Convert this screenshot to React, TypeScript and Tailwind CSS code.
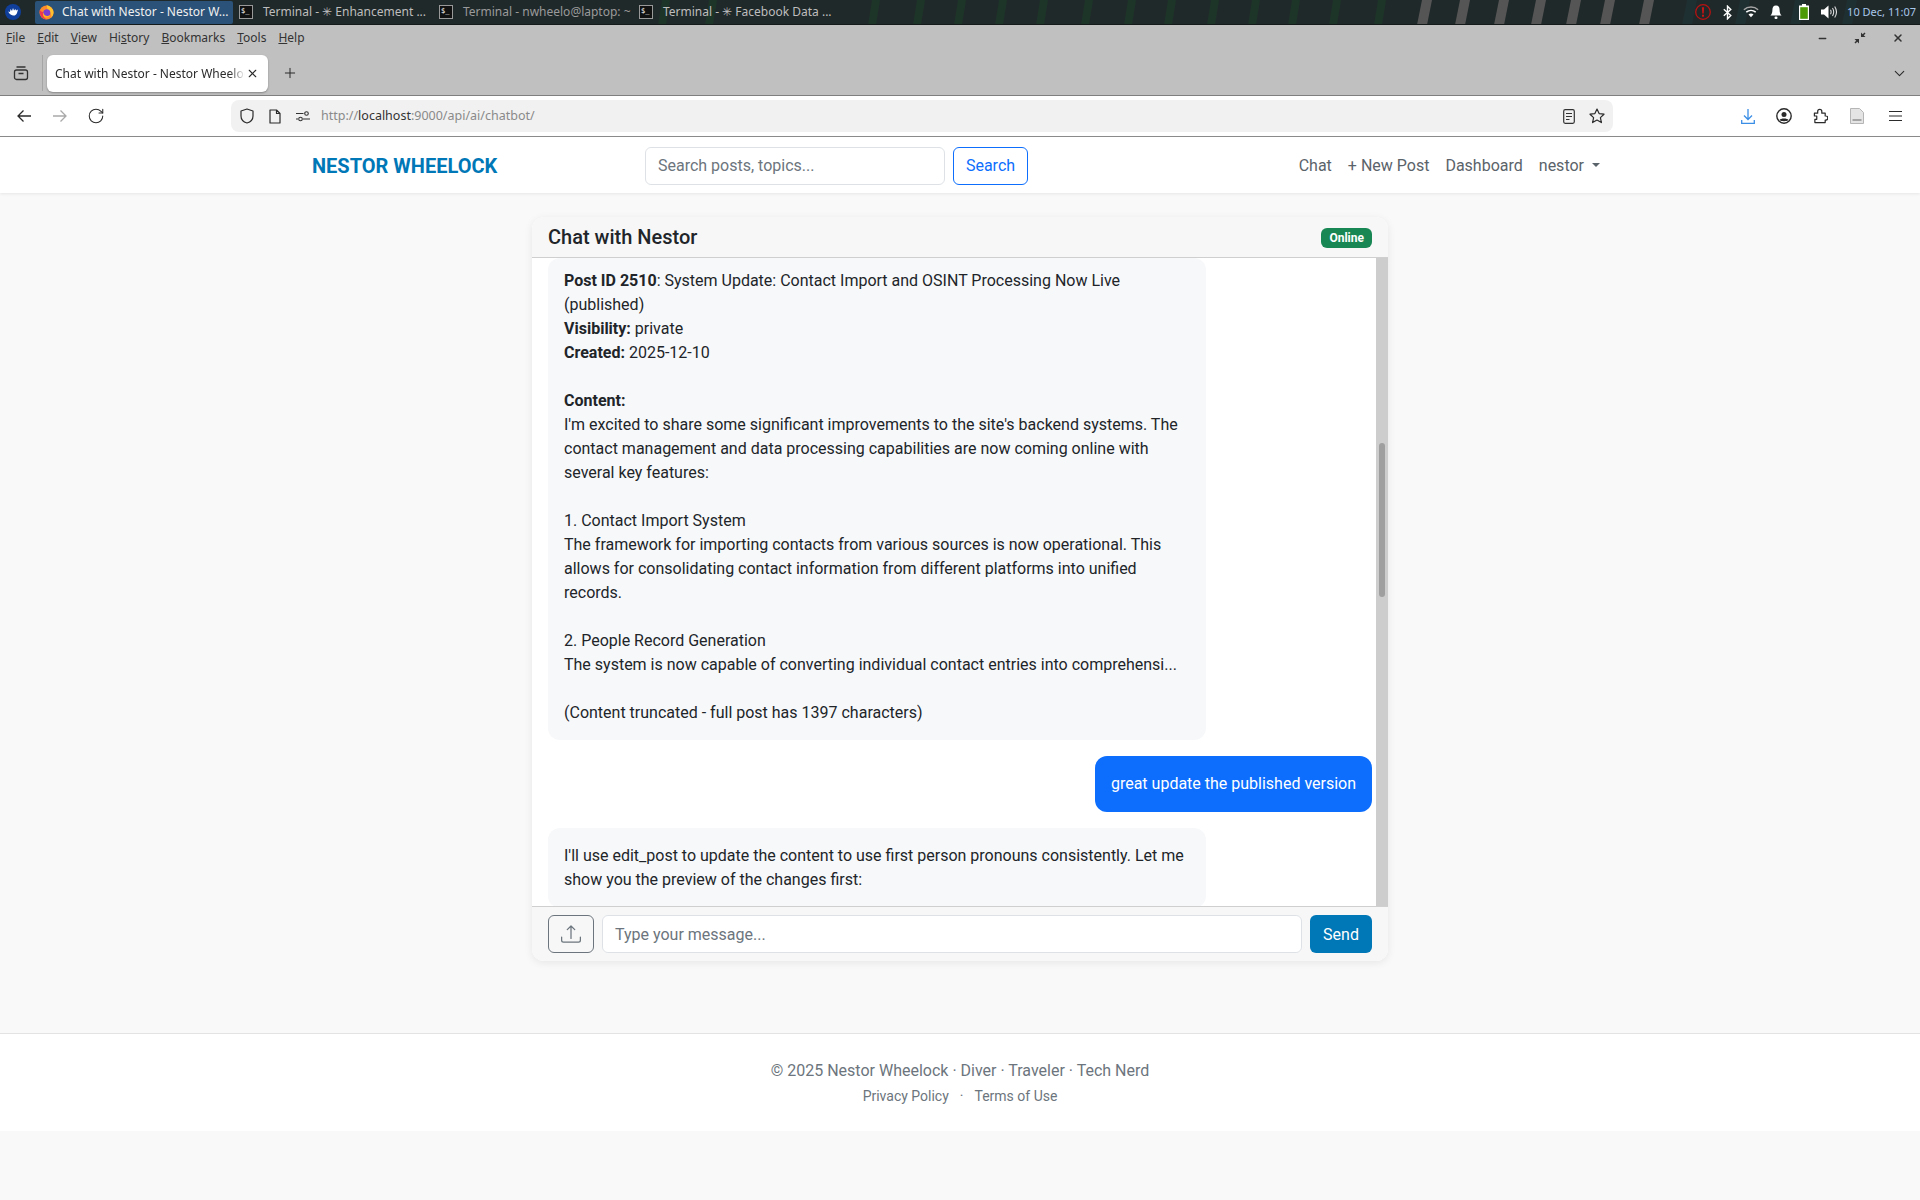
import React from "react";
import { BsUpload } from "react-icons/bs";
import { RotateCw, Plus, X, ChevronDown, Minus } from "lucide-react";

const ui = "font-['Noto_Sans','Open_Sans',sans-serif]";

const menus: [string, string, string][] = [
  ["", "F", "ile"],
  ["", "E", "dit"],
  ["", "V", "iew"],
  ["Hi", "s", "tory"],
  ["", "B", "ookmarks"],
  ["", "T", "ools"],
  ["", "H", "elp"],
];

const greenStripes = [658, 705, 868, 913, 954, 995, 1036, 1081, 1124, 1164, 1207, 1248, 1288, 1329, 1374];
const grayStripes = [1417, 1455, 1494, 1531, 1566, 1600, 1639];
const tealStripes = [1682, 1735, 1790, 1842];

const TermIcon = () => (
  <span className="w-[14px] h-[14px] bg-[#111] border border-[#999] text-white text-[7px] leading-[10px] pl-[1px] font-['DejaVu_Sans_Mono',monospace] shrink-0">
    $_
  </span>
);

const DesktopLogo = () => (
  <svg width="16" height="16" viewBox="0 0 16 16">
    <circle cx="8" cy="8" r="8" fill="#0f3f9a" />
    <path d="M3 7.500l2 .5 .5-3 1.500 2 1-3 1 2.500 1.500-1.500 .5 1.500 2-1-1 3.500c-.5 1.800-2 2.800-4 2.500-2-.3-3.800-1.600-4.500-3.500z" fill="#fff" />
  </svg>
);

const FirefoxLogo = () => (
  <svg width="15" height="16" viewBox="0 0 15 16">
    <circle cx="7.500" cy="8.500" r="7" fill="#ff8a2a" />
    <path d="M7.500 1c3.500 1 7 3.500 7 7.500 0 2-.8 3.800-2.200 5 .6-3.200-1-5.800-3.400-6.700C8.400 5 7.900 3 7.500 1z" fill="#ffc12e" />
    <path d="M.8 6c-.6 3.500 1 7.600 4.600 9 1 .4 2 .5 3 .4C4.800 14.500 3.200 11 4.400 8.200 3 8 1.600 7.300.8 6z" fill="#f0374d" />
    <circle cx="7.800" cy="8.800" r="3.500" fill="#7a3fd1" />
    <path d="M4.300 8.500c.4 2.300 2.300 3.700 4.500 3.500 1.300-.1 2.200-.8 2.700-1.700-.4 2-2 3.300-4 3.300-2.500 0-4.200-2.400-3.200-5.100z" fill="#ffb21f" />
  </svg>
);

const Tray = () => (
  <div className="flex items-center h-full text-white shrink-0">
    <svg width="16" height="16" viewBox="0 0 16 16" className="mr-[12px]">
      <circle cx="8" cy="8" r="7.300" fill="none" stroke="#b81212" strokeWidth="1.300" />
      <path d="M6.900 3.300h2.200L8.700 9.500H7.300z" fill="#c81414" />
      <rect x="7" y="10.700" width="2" height="2" fill="#c81414" />
    </svg>
    <svg width="9" height="15" viewBox="0 0 9 15" className="mr-[11px]" fill="none" stroke="#fff" strokeWidth="1.400">
      <path d="M.8 4.200l7 6.300-3.300 3.300V1.200l3.300 3.300-7 6.300" />
    </svg>
    <svg width="16" height="14" viewBox="0 0 18 14" className="mr-[11px]">
      <path d="M1 4.500C5.500.5 12.500.5 17 4.500" fill="none" stroke="#a5a5a5" strokeWidth="1.700" />
      <path d="M3.700 7.200C6.800 4.600 11.200 4.600 14.300 7.200" fill="none" stroke="#fff" strokeWidth="1.700" />
      <path d="M6.200 9.800c1.700-1.300 3.900-1.300 5.600 0L9 13z" fill="#fff" />
    </svg>
    <svg width="12" height="15" viewBox="0 0 12 15" className="mr-[17px]">
      <path d="M6 .5c2.700 0 3.600 2 3.600 4.500 0 3 .9 4.500 2 5.500H.4c1.100-1 2-2.500 2-5.500C2.400 2.500 3.300.5 6 .5z" fill="#fff" />
      <rect x="4.500" y="11.500" width="3" height="2.500" rx="1.200" fill="#fff" />
    </svg>
    <svg width="10" height="16" viewBox="0 0 10 16" className="mr-[12px]">
      <rect x="3" y="0" width="4" height="2" fill="#fff" />
      <rect x="0" y="1.500" width="10" height="14.500" fill="#fff" />
      <rect x="1.200" y="3.200" width="7.600" height="11.600" fill="#4b9a06" />
    </svg>
    <svg width="16" height="14" viewBox="0 0 16 14" className="mr-[10px]">
      <path d="M0 4.500h3L7.500 .5v13L3 9.500H0z" fill="#fff" />
      <path d="M9.500 4.800c.8 1.400.8 3 0 4.400M11.500 3c1.500 2.500 1.500 5.500 0 8M13.700 1.500c2.200 3.400 2.200 7.600 0 11" fill="none" stroke="#ddd" strokeWidth="1.100" />
    </svg>
    <span className="text-[11px] text-[#a9c7ea] mr-[4px]">10 Dec, 11:07</span>
  </div>
);

const TaskBar = () => (
  <div className={`relative h-[25px] bg-[#20292a] border-b border-[#14191a] flex items-center text-[12px] text-[#bdbdbd] overflow-hidden ${ui}`}>
    <svg width="1920" height="25" className="absolute left-0 top-0">
      {greenStripes.map((x) => (
        <polygon key={x} points={`${x},25 ${x + 8},25 ${x + 12},0 ${x + 4},0`} fill="#1d3529" />
      ))}
      {grayStripes.map((x) => (
        <polygon key={x} points={`${x},25 ${x + 10},25 ${x + 15},0 ${x + 5},0`} fill="#555555" />
      ))}
      {tealStripes.map((x) => (
        <polygon key={x} points={`${x},25 ${x + 10},25 ${x + 15},0 ${x + 5},0`} fill="#1f3033" />
      ))}
    </svg>
    <div className="relative flex items-center h-full w-full">
      <div className="w-[35px] flex items-center pl-[5px]">
        <DesktopLogo />
      </div>
      <div className="w-[198px] h-[23px] bg-[#2b5278] rounded-[2px] flex items-center pl-[4px] gap-[8px] text-[#f0f0f0]">
        <FirefoxLogo />
        <span>Chat with Nestor - Nestor W...</span>
      </div>
      <div className="w-[200px] flex items-center pl-[6px] gap-[10px]">
        <TermIcon />
        <span>Terminal - ✳ Enhancement ...</span>
      </div>
      <div className="w-[200px] flex items-center pl-[6px] gap-[10px] text-[#9a9a9a]">
        <TermIcon />
        <span>Terminal - nwheelo@laptop: ~</span>
      </div>
      <div className="flex items-center pl-[6px] gap-[10px]">
        <TermIcon />
        <span>Terminal - ✳ Facebook Data ...</span>
      </div>
      <div className="ml-auto h-full">
        <Tray />
      </div>
    </div>
  </div>
);

const BrowserChrome = () => (
  <div className={`${ui} text-[#2b2b2b]`}>
    <div className="bg-[#c0c0c0] h-[71px] border-b border-[#7f7f7f] flex flex-col">
      <div className="h-[26px] flex items-center pl-[6px] text-[12px] text-[#333]">
        <div className="flex gap-[12px]">
          {menus.map(([a, b, c]) => (
            <span key={b + c}>
              {a}
              <span className="underline">{b}</span>
              {c}
            </span>
          ))}
        </div>
        <div className="ml-auto flex items-center gap-[26px] pr-[16px]">
          <Minus size={11} strokeWidth={3} />
          <svg width="12" height="12" viewBox="0 0 12 12" fill="#333">
            <path d="M7 0.500v4.500h4.500zM5 11.500V7H0.500z" />
            <path d="M1 11l3-3M11 1L8 4" stroke="#333" strokeWidth="1.500" />
          </svg>
          <X size={12} strokeWidth={3} />
        </div>
      </div>
      <div className="flex-1 flex items-start">
        <div className="w-[43px] h-[36px] mt-[4px] border-r border-[#a5a5a5] flex items-center justify-center shrink-0">
          <svg width="16" height="16" viewBox="0 0 16 16" fill="none" stroke="#333" strokeWidth="1.300">
            <rect x="1.500" y="5" width="13" height="9.500" rx="2" />
            <path d="M3.500 2h9M5.500 8.500h5" />
          </svg>
        </div>
        <div className="ml-[4px] mt-[4px] w-[221px] h-[37px] bg-white rounded-[6px] shadow-[0_1px_2px_rgba(0,0,0,0.3)] flex items-center pl-[8px] pr-[9px] text-[12px] shrink-0">
          <span className="w-[190px] overflow-hidden whitespace-nowrap [mask-image:linear-gradient(to_right,black_92%,transparent)]">
            Chat with Nestor - Nestor Wheelock
          </span>
          <X size={13} strokeWidth={2} className="ml-auto" />
        </div>
        <Plus size={16} strokeWidth={1.500} className="ml-[14px] mt-[14px]" />
        <ChevronDown size={17} strokeWidth={1.500} className="ml-auto mr-[12px] mt-[14px]" />
      </div>
    </div>
    <div className="h-[41px] bg-white border-b border-[#8c8c8c] flex items-center text-[#2b2b2b]">
      <div className="w-[231px] flex items-center pl-[17px] shrink-0">
        <svg width="14" height="14" viewBox="0 0 14 14" fill="none" stroke="#2b2b2b" strokeWidth="1.300">
          <path d="M14 7H1M6.500 1.500L1 7l5.500 5.500" />
        </svg>
        <svg width="14" height="14" viewBox="0 0 14 14" fill="none" stroke="#a9a9a9" strokeWidth="1.300" className="ml-[22px]">
          <path d="M0 7h13M7.500 1.500L13 7l-5.500 5.500" />
        </svg>
        <RotateCw size={18} strokeWidth={1.400} className="ml-[20px]" />
      </div>
      <div className="w-[1382px] h-[32px] bg-[#f1f1f1] rounded-[8px] flex items-center pl-[9px] pr-[8px] shrink-0">
        <svg width="14" height="16" viewBox="0 0 14 16" fill="none" stroke="#2b2b2b" strokeWidth="1.200" strokeLinejoin="round">
          <path d="M7 1l6 2v5c0 3.500-2.500 6-6 7-3.500-1-6-3.500-6-7V3z" />
        </svg>
        <svg width="12" height="15" viewBox="0 0 12 15" fill="none" stroke="#2b2b2b" strokeWidth="1.200" strokeLinejoin="round" className="ml-[15px]">
          <path d="M1 1h6.500L11 4.500V14H1zM7.500 1v3.500H11" />
        </svg>
        <svg width="14" height="12" viewBox="0 0 14 12" fill="none" stroke="#333" strokeWidth="1.100" className="ml-[15px]">
          <path d="M0 3.500h7.500M0 9h2M7 9h7" />
          <circle cx="10.500" cy="3.500" r="1.800" />
          <circle cx="4.500" cy="9" r="1.800" />
        </svg>
        <span className="ml-[11px] text-[12.500px] text-[#8a8a8a]">
          http://<span className="text-[#333]">localhost</span>:9000/api/ai/chatbot/
        </span>
        <svg width="12" height="15" viewBox="0 0 12 15" fill="none" stroke="#333" strokeWidth="1.200" className="ml-auto">
          <rect x="0.700" y="0.700" width="10.600" height="13.600" rx="1.500" />
          <path d="M3 4.500h6M3 7.500h6M3 10.500h3.500" />
        </svg>
        <svg width="16" height="16" viewBox="0 0 16 16" fill="none" stroke="#2b2b2b" strokeWidth="1.200" strokeLinejoin="round" className="ml-[14px]">
          <polygon points="8,1 10.100,5.600 15,6.200 11.400,9.600 12.400,14.600 8,12.100 3.600,14.600 4.600,9.600 1,6.200 5.900,5.600" />
        </svg>
      </div>
      <div className="flex-1 flex items-center pl-[128px]">
        <svg width="14" height="15" viewBox="0 0 14 15" fill="none" stroke="#3b8ee6" strokeWidth="1.300">
          <path d="M7 0v10.500M3 6.500l4 4 4-4M.7 11v3.300h12.600V11" />
        </svg>
        <svg width="16" height="16" viewBox="0 0 16 16" className="ml-[21px]">
          <circle cx="8" cy="8" r="7.200" fill="none" stroke="#2b2b2b" strokeWidth="1.400" />
          <circle cx="8" cy="6.500" r="2.500" fill="#2b2b2b" />
          <path d="M3.500 12c1-2 8-2 9 0-1.500 1.600-7.500 1.600-9 0z" fill="#2b2b2b" />
        </svg>
        <svg width="15" height="16" viewBox="0 0 16 16" fill="none" stroke="#2b2b2b" strokeWidth="1.300" strokeLinejoin="round" className="ml-[21px]">
          <path d="M1.500 5H5V3.200a2.200 2.200 0 0 1 4.400 0V5H13v3h.6a2.200 2.200 0 0 1 0 4.400H13V15H2v-3.500h2V8H1.500z" />
        </svg>
        <svg width="14" height="16" viewBox="0 0 14 16" className="ml-[22px]">
          <path d="M.5.5h9l4 4v11H.5z" fill="#e4e4e4" stroke="#b5b5b5" />
          <rect x="2.500" y="11" width="9" height="2" fill="#a5a5a5" />
        </svg>
        <svg width="13" height="12" viewBox="0 0 13 12" stroke="#2b2b2b" strokeWidth="1.200" className="ml-[25px]">
          <path d="M0 1.500h13M0 6h13M0 10.500h13" />
        </svg>
      </div>
    </div>
  </div>
);

const SiteNav = () => (
  <nav className="h-[56px] pt-[1px] bg-white shadow-[0_1px_3px_rgba(0,0,0,0.08)] relative">
    <div className="w-[1320px] mx-auto h-full px-[12px] flex items-center">
      <a className="text-[20px] font-bold text-[#0077b6] w-[333px]">NESTOR WHEELOCK</a>
      <div className="flex items-center gap-[8px]">
        <div className="w-[300px] h-[38px] border border-[#dee2e6] rounded-[6px] bg-white flex items-center px-[12px] text-[#6c757d]">
          Search posts, topics...
        </div>
        <div className="w-[75px] h-[38px] border border-[#0d6efd] rounded-[6px] flex items-center justify-center text-[#0d6efd]">
          Search
        </div>
      </div>
      <div className="ml-auto flex items-center text-[#5b636a] gap-[16px] pr-[8px]">
        <span>Chat</span>
        <span>+ New Post</span>
        <span>Dashboard</span>
        <span className="flex items-center">
          nestor
          <span className="ml-[8px] mb-[2px] w-0 h-0 border-t-[4.800px] border-x-[4.800px] border-x-transparent border-t-[#5b636a]" />
        </span>
      </div>
    </div>
  </nav>
);

const AssistantBubble = ({ className, children }: { className?: string; children: React.ReactNode }) => (
  <div className={`w-[658px] bg-[#f7f8fa] rounded-[12px] px-[16px] ${className ?? ""}`}>{children}</div>
);

const ChatCard = () => (
  <div className="w-[856px] h-[744px] mx-auto mt-[24px] bg-white rounded-[12px] shadow-[0_2px_8px_rgba(0,0,0,0.08)] overflow-hidden flex flex-col">
    <div className="h-[41px] bg-[#f7f7f7] border-b border-[#cfcfcf] flex items-center justify-between pl-[16px] pr-[16px] shrink-0">
      <span className="text-[20px] leading-[24px] font-medium text-[#212529]">Chat with Nestor</span>
      <span className="bg-[#198754] text-white text-[12px] font-bold rounded-[6px] h-[20px] px-[8px] mt-[1px] flex items-center">Online</span>
    </div>
    <div className="flex-1 flex min-h-0">
      <div className="flex-1 overflow-hidden pl-[16px] pr-[4px] flex flex-col">
        <AssistantBubble className="pt-[11px] pb-[15px] shrink-0">
          <div className="leading-[24px] text-[#212529]">
            <b className="font-bold">Post ID 2510</b>: System Update: Contact Import and OSINT Processing Now Live (published)
            <br />
            <b className="font-bold">Visibility:</b> private
            <br />
            <b className="font-bold">Created:</b> 2025-12-10
            <br />
            <br />
            <b className="font-bold">Content:</b>
            <br />
            I'm excited to share some significant improvements to the site's backend systems. The contact management and data processing capabilities are now coming online with several key features:
            <br />
            <br />
            1. Contact Import System
            <br />
            The framework for importing contacts from various sources is now operational. This allows for consolidating contact information from different platforms into unified records.
            <br />
            <br />
            2. People Record Generation
            <br />
            The system is now capable of converting individual contact entries into comprehensi...
            <br />
            <br />
            (Content truncated - full post has 1397 characters)
          </div>
        </AssistantBubble>
        <div className="self-end mt-[16px] h-[56px] w-[277px] bg-[#0d6efd] text-white rounded-[12px] flex items-center justify-center shrink-0">
          great update the published version
        </div>
        <AssistantBubble className="pt-[16px] pb-[16px] mt-[16px] shrink-0">
          <div className="leading-[24px] text-[#212529]">
            I'll use edit_post to update the content to use first person pronouns consistently. Let me show you the preview of the changes first:
          </div>
        </AssistantBubble>
      </div>
      <div className="w-[12px] bg-[#cdcdcd] shrink-0 pt-[185px] flex justify-center">
        <div className="w-[6px] h-[154px] bg-[#9f9f9f] rounded-[3px]" />
      </div>
    </div>
    <div className="h-[55px] bg-[#f7f7f7] border-t border-[#cfcfcf] flex items-center gap-[8px] px-[16px] shrink-0">
      <div className="w-[46px] h-[38px] border border-[#6c757d] rounded-[6px] flex items-center justify-center text-[#6c757d]">
        <BsUpload size={20} />
      </div>
      <div className="flex-1 h-[38px] bg-white border border-[#dee2e6] rounded-[6px] flex items-center px-[12px] pt-[1px] text-[#6c757d]">
        Type your message...
      </div>
      <div className="w-[62px] h-[38px] bg-[#0077b6] text-white rounded-[6px] pt-[1px] flex items-center justify-center">Send</div>
    </div>
  </div>
);

const SiteFooter = () => (
  <footer className="mt-[72px] h-[98px] bg-white border-t border-[#e3e3e3] flex flex-col items-center pt-[25px] text-[#6c757d]">
    <div className="leading-[24px]">© 2025 Nestor Wheelock · Diver · Traveler · Tech Nerd</div>
    <div className="text-[14px] leading-[21px] mt-[3px] flex gap-[11px]">
      <span>Privacy Policy</span>
      <span>·</span>
      <span>Terms of Use</span>
    </div>
  </footer>
);

export default function App() {
  return (
    <div className="min-h-screen bg-[#f9f9f9] font-['Roboto',sans-serif] text-[16px] text-[#212529]">
      <TaskBar />
      <BrowserChrome />
      <SiteNav />
      <ChatCard />
      <SiteFooter />
    </div>
  );
}
